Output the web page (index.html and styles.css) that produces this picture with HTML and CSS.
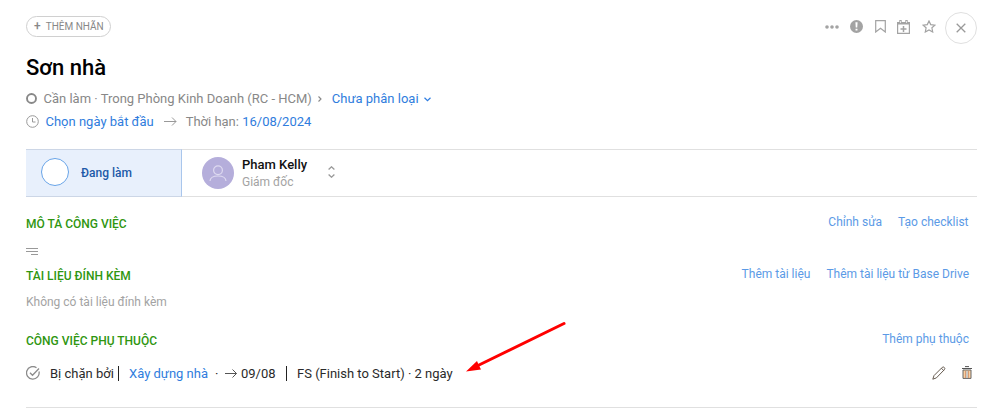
FILE: index.html
```
<!DOCTYPE html>
<html lang="vi">
<head>
    <meta charset="UTF-8">
    <meta name="viewport" content="width=device-width, initial-scale=1.0">
    <title>Sơn nhà</title>
    <link rel="stylesheet" href="styles.css">
</head>
<body>
    <div class="task">
        <div class="topbar">
            <button class="tag"><span class="plus">+</span>THÊM NHÃN</button>
            <div class="tools">
                <svg class="more" width="14" height="4" viewBox="0 0 14 4" fill="#a3a3a3"><circle cx="2" cy="2" r="1.800"/><circle cx="7" cy="2" r="1.800"/><circle cx="12" cy="2" r="1.800"/></svg>
                <svg class="alert" width="13" height="13" viewBox="0 0 12 12"><circle cx="6" cy="6" r="6" fill="#a3a3a3"/><path d="M5 2h2l-.3 5H5.300zM5.100 8h1.800v1.800H5.100z" fill="#fff"/></svg>
                <svg class="bookmark" width="11" height="13" viewBox="0 0 11 13" fill="none" stroke="#a3a3a3" stroke-width="1.200"><path d="M.7.700h9.600v11.300L5.500 8.300.7 12z"/></svg>
                <svg class="calendar" width="13" height="14" viewBox="0 0 13 14"><path d="M.6 3h11.800v10.400H.6z" fill="none" stroke="#a3a3a3" stroke-width="1.200"/><path d="M0 2h13v2.600H0zM2.300 0h2.400v4H2.300zM8.300 0h2.400v4H8.300z" fill="#a3a3a3"/><path d="M3.500 1v2M9.500 1v2" stroke="#fff" stroke-width=".7"/><path d="M6.500 6v6M3.500 9h6" stroke="#a3a3a3" stroke-width="1.500"/></svg>
                <svg class="star" width="14" height="13" viewBox="0 0 14 13" fill="none" stroke="#a3a3a3" stroke-width="1.200"><path d="M7 1l1.700 3.600 4.200.5-3 2.700.8 4.200L7 10l-3.700 2 .8-4.200-3-2.700 4.200-.5z"/></svg>
                <button class="close"><svg width="10" height="10" viewBox="0 0 10 10" stroke="#999" stroke-width="1.300"><path d="M.7.700l8.600 8.600M9.300.700L.7 9.300"/></svg></button>
            </div>
        </div>

        <h1>Sơn nhà</h1>

        <div class="info">
            <svg class="ring" width="11" height="11" viewBox="0 0 11 11" fill="none" stroke="#888" stroke-width="1.900"><circle cx="5.500" cy="5.500" r="4.500"/></svg>
            <span class="place">Cần làm · Trong Phòng Kinh Doanh (RC - HCM)</span>
            <svg class="next" width="4" height="6" viewBox="0 0 4 6" fill="none" stroke="#888" stroke-width="1.100"><path d="M.5.500L3 3 .5 5.500"/></svg>
            <a class="category">Chưa phân loại</a>
            <svg class="down" width="7" height="5" viewBox="0 0 7 5" fill="none" stroke="#2f7de1" stroke-width="1.200"><path d="M.5.800l3 2.900 3-2.900"/></svg>
        </div>
        <div class="info dates">
            <svg class="clock" width="13" height="13" viewBox="0 0 13 13" fill="none" stroke="#999"><circle cx="6.500" cy="6.500" r="5.800"/><path d="M6.500 3v4h3"/></svg>
            <a class="start">Chọn ngày bắt đầu</a>
            <svg class="arrow" width="13" height="9" viewBox="0 0 13 9" fill="none" stroke="#999"><path d="M0 4.500h12M8 .5l4 4-4 4"/></svg>
            <span class="deadline">Thời hạn: <a>16/08/2024</a></span>
        </div>

        <div class="status">
            <div class="state"><span class="circle"></span>Đang làm</div>
            <div class="owner">
                <div class="avatar"><svg width="18" height="17" viewBox="0 0 18 17" fill="none" stroke="#dedaf0" stroke-width="1.200"><circle cx="9" cy="5.300" r="4.400"/><path d="M1 16c.2-3.500 3-5 8-5s7.800 1.500 8 5"/></svg></div>
                <div class="person">
                    <div class="name">Pham Kelly</div>
                    <div class="role">Giám đốc</div>
                </div>
                <svg class="sort" width="7" height="12" viewBox="0 0 7 12" fill="none" stroke="#999" stroke-width="1.300"><path d="M.6 3.500l2.900-2.700 2.900 2.700M.6 8.500l2.900 2.700 2.900-2.700"/></svg>
            </div>
        </div>

        <div class="section description">
            <div class="head"><h2>MÔ TẢ CÔNG VIỆC</h2><div class="links"><a class="edit">Chỉnh sửa</a><a class="checklist">Tạo checklist</a></div></div>
            <div class="lines"><svg width="12" height="7" viewBox="0 0 12 7" fill="#999"><path d="M0 0h12v1H0zM0 3h12v1H0zM5 6h7v1H5z"/></svg></div>
        </div>
        <div class="section files">
            <div class="head"><h2>TÀI LIỆU ĐÍNH KÈM</h2><div class="links"><a class="add-file">Thêm tài liệu</a><a class="add-drive">Thêm tài liệu từ Base Drive</a></div></div>
            <div class="empty">Không có tài liệu đính kèm</div>
        </div>
        <div class="section depends">
            <div class="head"><h2>CÔNG VIỆC PHỤ THUỘC</h2><div class="links"><a class="add-depend">Thêm phụ thuộc</a></div></div>
            <div class="depend">
                <svg class="check" width="14" height="14" viewBox="0 0 14 14" fill="none" stroke="#8c8c8c" stroke-width="1.300"><path d="M13 5.500A6.300 6.300 0 1 1 10.500 1.700M4 6.800L6.500 9.300 13 2.500"/></svg>
                <span class="blocked">Bị chặn bởi</span>
                <span class="bar"></span>
                <a class="task-link">Xây dựng nhà</a>
                <span class="dot">·</span>
                <svg class="to" width="12" height="9" viewBox="0 0 12 9" fill="none" stroke="#555"><path d="M0 4.500h11.500M7.500.5l4 4-4 4"/></svg>
                <span class="date">09/08</span>
                <span class="bar"></span>
                <span class="type">FS (Finish to Start) · 2 ngày</span>
                <div class="actions">
                    <svg width="14" height="14" viewBox="0 0 14 14" fill="none" stroke="#665b50"><path d="M.8 13.200L2 9.600 10.300 1.300q1-.8 2 .2t.2 2L4.400 11.900zM9.400 2.200l2.300 2.300"/></svg>
                    <svg class="trash" width="10" height="13" viewBox="0 0 10 13"><path d="M0 2.500h10M3 .6h4" stroke="#555"/><path d="M1 4h8v8.400H1z" fill="#fbd0a0" stroke="#666"/><path d="M3.500 5v7M6.500 5v7" stroke="#d79a72"/><path d="M5 5v7" stroke="#9cc3e6"/></svg>
                </div>
            </div>
        </div>
        <svg class="pointer" width="100" height="52" viewBox="0 0 100 52"><path d="M98 3.500L12 45.500" stroke="#f00" stroke-width="3" stroke-linecap="round"/><path d="M0 51.500L11 41l1.500 3.500L15 49.500z" fill="#f00"/></svg>
    </div>
</body>
</html>
```
FILE: styles.css
```
* {
    box-sizing: border-box;
}
body {
    margin: 0;
    height: 408px;
    background: #fff;
    font-family: Roboto, sans-serif;
    font-size: 13px;
    color: #2a2a2a;
    overflow: hidden;
}
.task {
    position: relative;
    width: 951px;
    height: 408px;
    margin-left: 26px;
    padding-top: 11px;
    border-bottom: 1px solid #e0e0e0;
    white-space: nowrap;
}
a {
    color: #2f7ddd;
}
svg {
    display: block;
    flex-shrink: 0;
}
button {
    font-family: inherit;
    background: #fff;
    padding: 0;
}
.topbar {
    display: flex;
    justify-content: space-between;
    height: 33px;
}
.tag {
    width: 85px;
    height: 21px;
    margin-top: 5px;
    border: 1px solid #d0d0d0;
    border-radius: 11px;
    color: #888;
    font-size: 10px;
    line-height: 19px;
    text-align: left;
    padding-left: 7px;
}
.plus {
    font-size: 12px;
    font-weight: 500;
    margin-right: 5px;
}
.tools {
    display: flex;
    align-items: center;
}
.tools > svg {
    margin-bottom: 2px;
}
.alert {
    margin-left: 11px;
}
.bookmark {
    margin-left: 12px;
}
.calendar {
    margin-left: 11px;
}
.star {
    margin-left: 12px;
}
.close {
    display: flex;
    align-items: center;
    justify-content: center;
    width: 32px;
    height: 32px;
    margin-left: 9px;
    border: 1px solid #e0e0e0;
    border-radius: 50%;
}
h1 {
    height: 43px;
    margin: 0;
    font-size: 22px;
    font-weight: 500;
    line-height: 47px;
    color: #000;
}
.info {
    display: flex;
    align-items: center;
    height: 22px;
    color: #888;
}
.place {
    margin-left: 6.5px;
}
.next {
    margin-left: 6.5px;
    margin-top: 2px;
}
.category {
    margin-left: 9.5px;
}
.down {
    margin-left: 5px;
    margin-top: 2px;
}
.dates {
    height: 24px;
}
.start {
    margin-left: 6.5px;
}
.arrow {
    margin-left: 10px;
}
.deadline {
    margin-left: 9px;
}
.status {
    display: flex;
    height: 48px;
    margin-top: 16px;
    border-top: 1px solid #e0e0e0;
    border-bottom: 1px solid #e0e0e0;
}
.state {
    display: flex;
    align-items: center;
    width: 156px;
    margin: -1px 0;
    padding-left: 15px;
    background: #e8f0fc;
    border: solid #ccd6e6;
    border-width: 1px 0;
    border-right: 1px solid #a9c6ec;
    color: #1d5aa8;
    font-size: 12px;
    font-weight: 500;
}
.circle {
    width: 28px;
    height: 28px;
    margin-right: 12px;
    margin-top: -2px;
    border: 1px solid #68a4e8;
    border-radius: 50%;
    background: #fff;
}
.owner {
    display: flex;
    align-items: center;
    padding-left: 20px;
}
.avatar {
    display: flex;
    align-items: center;
    justify-content: center;
    width: 32px;
    height: 32px;
    border-radius: 50%;
    background: #b5aedb;
}
.person {
    width: 86px;
    margin-left: 8px;
    line-height: 17px;
}
.name {
    color: #111;
    font-weight: 500;
}
.role {
    height: 17px;
    font-size: 12px;
    line-height: 19px;
    color: #a3a3a3;
}
.sort {
    margin-bottom: 2px;
}
.head {
    display: flex;
    justify-content: space-between;
    height: 24px;
}
h2 {
    margin: 0;
    font-size: 12px;
    font-weight: 500;
    line-height: 24px;
    color: #2f9610;
}
.links {
    display: flex;
    gap: 16px;
    margin-right: 8px;
    font-size: 12px;
    line-height: 20px;
}
.description .links {
    margin-right: 8.5px;
}
.links a {
    color: #5b9ae6;
}
.description {
    height: 52px;
    margin-top: 15px;
}
.lines {
    padding-top: 12px;
}
.files {
    height: 65px;
}
.empty {
    font-size: 12px;
    line-height: 28px;
    color: #a3a3a3;
}
.depend {
    display: flex;
    align-items: center;
    height: 20px;
    margin-top: 10px;
}
.blocked {
    width: 68px;
    margin-left: 10px;
}
.bar {
    width: 1px;
    height: 15px;
    background: #222;
}
.task-link {
    width: 79px;
    margin-left: 10px;
}
.dot {
    width: 4px;
    margin-left: 7px;
}
.to {
    margin-left: 6px;
}
.date {
    width: 45px;
    margin-left: 4px;
}
.type {
    margin-left: 10px;
}
.actions {
    display: flex;
    gap: 16px;
    margin-left: auto;
    margin-right: 5px;
}
.pointer {
    position: absolute;
    left: 440px;
    top: 320px;
}
```
